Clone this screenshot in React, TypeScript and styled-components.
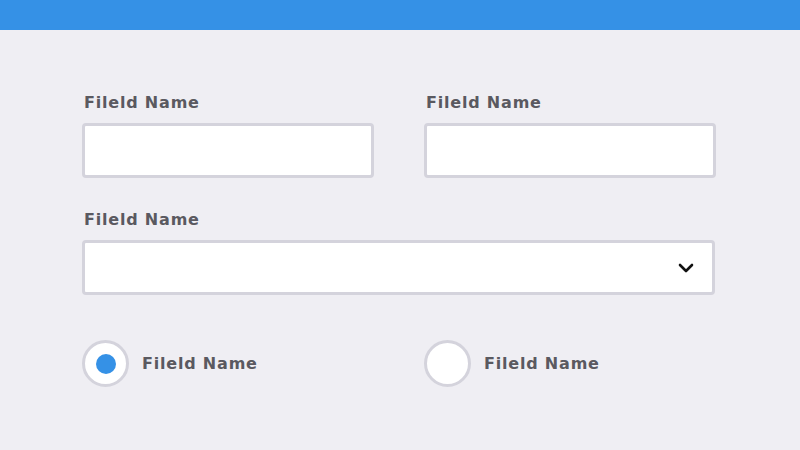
import React from "react";
import styled, { createGlobalStyle } from "styled-components";

const Global = createGlobalStyle`
  html, body { margin: 0; padding: 0; background: #efeef3; }
  body { font-family: "DejaVu Sans", "Liberation Sans", sans-serif; }
`;

const Page = styled.div`
  width: 800px;
  height: 450px;
  background: #efeef3;
  display: flex;
  flex-direction: column;
`;

const TopBar = styled.div`
  height: 30px;
  background: #3591e6;
`;

const Form = styled.div`
  padding: 63px 0 0 82px;
  width: 633px;
  display: flex;
  flex-direction: column;
`;

const Row = styled.div<{ $gap?: number }>`
  display: grid;
  grid-template-columns: 292px 292px;
  column-gap: 50px;
  margin-bottom: ${(p) => p.$gap ?? 0}px;
`;

const Field = styled.div`
  display: flex;
  flex-direction: column;
`;

const Label = styled.label`
  font-size: 16px;
  font-weight: 600;
  color: #5a5960;
  line-height: 20px;
  margin: 0 0 10px 2px;
  letter-spacing: 0.8px;
`;

const Input = styled.div`
  box-sizing: border-box;
  height: 55px;
  background: #fff;
  border: 3px solid #d4d3dc;
  border-radius: 4px;
`;

const SelectBox = styled(Input)`
  display: flex;
  align-items: center;
  justify-content: flex-end;
  padding-right: 18px;
  margin-bottom: 45px;
`;

const RadioItem = styled.div`
  display: flex;
  align-items: center;
  gap: 13px;
`;

const Circle = styled.div<{ $checked?: boolean }>`
  box-sizing: border-box;
  width: 47px;
  height: 47px;
  border-radius: 50%;
  background: #fff;
  border: 3px solid #d4d3dc;
  display: flex;
  align-items: center;
  justify-content: center;
  &::after {
    content: "";
    width: 20px;
    height: 20px;
    border-radius: 50%;
    background: #3591e6;
    display: ${(p) => (p.$checked ? "block" : "none")};
  }
`;

const RadioLabel = styled.span`
  font-size: 16px;
  font-weight: 600;
  color: #5a5960;
  letter-spacing: 0.8px;
`;

const Chevron = () => (
  <svg width="16" height="10" viewBox="0 0 16 10">
    <path d="M2 2 L8 8 L14 2" fill="none" stroke="#111" strokeWidth="2.6" strokeLinecap="round" strokeLinejoin="round" />
  </svg>
);

export default function App() {
  return (
    <Page>
      <Global />
      <TopBar />
      <Form>
        <Row $gap={32}>
          <Field>
            <Label>Fileld Name</Label>
            <Input />
          </Field>
          <Field>
            <Label>Fileld Name</Label>
            <Input />
          </Field>
        </Row>
        <Field>
          <Label>Fileld Name</Label>
          <SelectBox>
            <Chevron />
          </SelectBox>
        </Field>
        <Row>
          <RadioItem>
            <Circle $checked />
            <RadioLabel>Fileld Name</RadioLabel>
          </RadioItem>
          <RadioItem>
            <Circle />
            <RadioLabel>Fileld Name</RadioLabel>
          </RadioItem>
        </Row>
      </Form>
    </Page>
  );
}
